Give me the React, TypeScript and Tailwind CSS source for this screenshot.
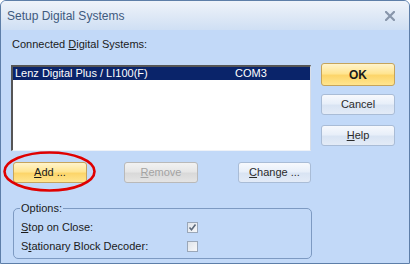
import React from "react";

const font = { fontFamily: '"Liberation Sans", Arial, sans-serif' };

function Btn({
  children,
  variant = "normal",
  className = "",
}: {
  children: React.ReactNode;
  variant?: "normal" | "yellow" | "disabled";
  className?: string;
}) {
  const base =
    "flex items-center justify-center rounded-[3px] border text-[11px] leading-none";
  const v =
    variant === "yellow"
      ? "border-[#c5a45c] bg-[linear-gradient(to_bottom,#fff4cc_0%,#ffe592_45%,#fcd56a_55%,#ffe58f_100%)] text-[#1a1a1a]"
      : variant === "disabled"
      ? "border-[#b9b9b9] bg-[linear-gradient(to_bottom,#f2f2f2_0%,#e6e6e6_45%,#d9d9d9_55%,#e4e4e4_100%)] text-[#a3a3a3]"
      : "border-[#a9bcd6] bg-[linear-gradient(to_bottom,#f7f9fd_0%,#e8eff9_45%,#d9e4f3_55%,#e3ebf7_100%)] text-[#2b2b2b]";
  return <div className={`${base} ${v} ${className}`}>{children}</div>;
}

export default function App() {
  return (
    <div
      className="w-[410px] h-[264px] flex flex-col border border-[#5d7ea8] rounded-t-[6px] overflow-hidden bg-[#c2d9f8]"
      style={font}
    >
      {/* Title bar */}
      <div className="h-[29px] flex items-center justify-between pl-[6px] pr-[14px] bg-[linear-gradient(to_bottom,#eef3fa_0%,#dfe9f6_50%,#cfdff4_100%)]">
        <span className="text-[12px] text-[#3e5a7e]">Setup Digital Systems</span>
        <svg width="10" height="10" viewBox="0 0 10 10">
          <path d="M1 1 L9 9 M9 1 L1 9" stroke="#8896ab" strokeWidth="2.2" strokeLinecap="square" />
        </svg>
      </div>

      {/* Body */}
      <div className="flex-1 flex flex-col">
        <div className="ml-[11px] mt-[8px] text-[11px] leading-[13px] text-[#1b1b1b]">
          Connected <span className="underline">D</span>igital Systems:
        </div>

        <div className="flex mt-[12px]">
          {/* Left column */}
          <div className="ml-[10px] w-[300px] flex flex-col">
            <div className="mt-[2px] h-[86px] bg-white border-t-2 border-l-2 border-r border-b border-t-[#555] border-l-[#555] border-r-[#d8dde6] border-b-[#eef2f8]">
              <div className="h-[13px] bg-[#0a246a] text-white text-[11px] leading-[13px] flex">
                <span className="pl-[2px] w-[222px]">Lenz Digital Plus / LI100(F)</span>
                <span>COM3</span>
              </div>
            </div>
            <div className="flex mt-[11px] h-[21px]">
              <div className="relative ml-[2px]">
                <Btn variant="yellow" className="w-[74px] h-[21px]">
                  <span>
                    <span className="underline">A</span>dd ...
                  </span>
                </Btn>
                <svg
                  className="absolute left-[-10px] top-[-11px] pointer-events-none"
                  width="93"
                  height="41"
                  viewBox="0 0 93 41"
                >
                  <ellipse cx="46.5" cy="20.5" rx="45" ry="19" fill="none" stroke="#e00000" strokeWidth="2.6" />
                </svg>
              </div>
              <Btn variant="disabled" className="ml-[37px] w-[74px] h-[21px]">
                <span>
                  <span className="underline">R</span>emove
                </span>
              </Btn>
              <Btn className="ml-[40px] w-[73px] h-[21px]">
                <span>
                  <span className="underline">C</span>hange ...
                </span>
              </Btn>
            </div>
          </div>

          {/* Right column */}
          <div className="ml-[10px] w-[74px] flex flex-col">
            <Btn variant="yellow" className="h-[23px] !text-[12px] font-bold">
              OK
            </Btn>
            <Btn className="mt-[8px] h-[21px]">Cancel</Btn>
            <Btn className="mt-[10px] h-[21px]">
              <span>
                <span className="underline">H</span>elp
              </span>
            </Btn>
          </div>
        </div>

        {/* Options group */}
        <div className="relative ml-[12px] mt-[25px] w-[299px] h-[51px] border border-[#7d9ac2] rounded-[5px]">
          <span className="absolute left-[6px] top-[-7px] px-[1px] bg-[#c2d9f8] text-[11px] leading-[13px] text-[#1b1b1b]">
            Options:
          </span>
          <div className="flex flex-col pl-[7px] pt-[9px] text-[11px] leading-[13px] text-[#1b1b1b]">
            <div className="flex items-center h-[19px]">
              <span className="w-[166px]">
                <span className="underline">S</span>top on Close:
              </span>
              <div className="w-[11px] h-[11px] border border-[#9aa7b8] bg-[linear-gradient(135deg,#dfe4ea,#f6f7f9)] flex items-center justify-center">
                <svg width="9" height="9" viewBox="0 0 9 9">
                  <path d="M1.5 4.5 L3.5 6.8 L7.5 1.5" fill="none" stroke="#5d6a7c" strokeWidth="1.6" />
                </svg>
              </div>
            </div>
            <div className="flex items-center h-[19px]">
              <span className="w-[166px]">
                S<span className="underline">t</span>ationary Block Decoder:
              </span>
              <div className="w-[11px] h-[11px] border border-[#9aa7b8] bg-[linear-gradient(135deg,#dfe4ea,#f6f7f9)]" />
            </div>
          </div>
        </div>
      </div>
    </div>
  );
}
